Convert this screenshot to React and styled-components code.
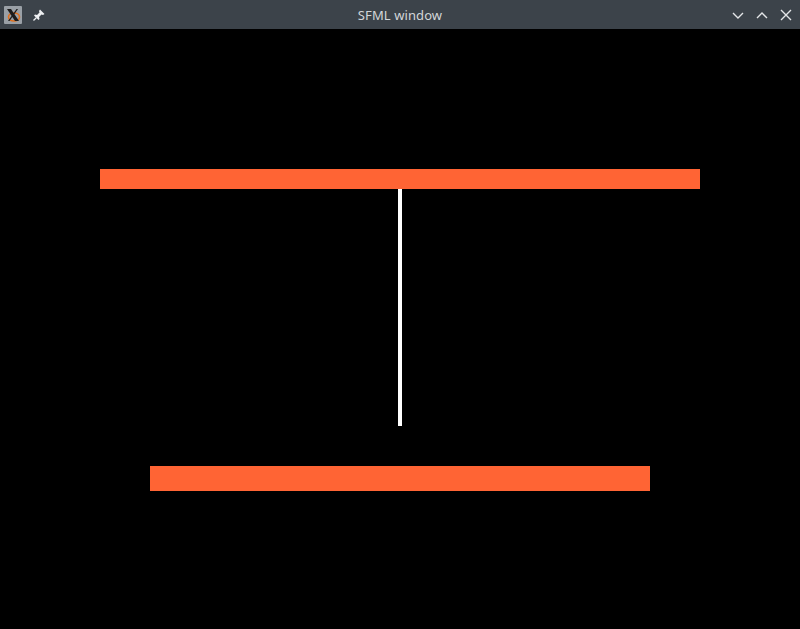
import React from "react";
import styled, { createGlobalStyle } from "styled-components";

const GlobalStyle = createGlobalStyle`
  html, body {
    margin: 0;
    padding: 0;
    background: #000;
  }
  body {
    font-family: "Noto Sans", "DejaVu Sans", sans-serif;
  }
`;

const Window = styled.div`
  width: 800px;
  height: 629px;
  display: flex;
  flex-direction: column;
  background: #000;
  overflow: hidden;
`;

const TitleBar = styled.div`
  height: 29px;
  flex: 0 0 29px;
  background: #3c434a;
  display: grid;
  grid-template-columns: 1fr auto 1fr;
  align-items: center;
  color: #d3d6d9;
  font-size: 13px;
`;

const Side = styled.div`
  display: flex;
  align-items: center;
  gap: ${p => p.gap || 6}px;
  justify-content: ${p => (p.right ? "flex-end" : "flex-start")};
  padding: ${p => (p.right ? "0 7px 0 0" : "0 0 0 4px")};
`;

const AppIcon = styled.div`
  width: 18px;
  height: 18px;
  background: #9aa0a6;
  border-radius: 1px;
  display: flex;
  align-items: center;
  justify-content: center;
`;

const Title = styled.div`
  letter-spacing: 0.1px;
`;

const Canvas = styled.div`
  flex: 1;
  display: flex;
  flex-direction: column;
  align-items: center;
  padding-top: 140px;
`;

const Paddle = styled.div`
  width: ${p => p.w}px;
  height: ${p => p.h}px;
  background: #ff6434;
`;

const Rope = styled.div`
  width: 4px;
  height: 237px;
  background: #fff;
  margin-bottom: 40px;
`;

const Chevron = ({ up }) => (
  <svg width="14" height="14" viewBox="0 0 14 14">
    <path
      d={up ? "M2 10 L7 5 L12 10" : "M2 5 L7 10 L12 5"}
      fill="none"
      stroke="#e4e6e8"
      strokeWidth="1.4"
    />
  </svg>
);

const Close = () => (
  <svg width="14" height="14" viewBox="0 0 14 14">
    <path d="M2 2 L12 12 M12 2 L2 12" fill="none" stroke="#e4e6e8" strokeWidth="1.4" />
  </svg>
);

const Pin = () => (
  <svg width="14" height="14" viewBox="0 0 14 14">
    <path d="M8 1.5 L12.5 6 L11 7 L9.5 6.5 L7 9 L7.5 11 L6.5 12 L2 7.5 L3 6.5 L5 7 L7.5 4.5 L7 3 Z" fill="#eef0f2" />
    <path d="M4.3 9.7 L1.5 12.5" stroke="#eef0f2" strokeWidth="1.3" />
  </svg>
);

const XLogo = () => (
  <svg width="16" height="16" viewBox="0 0 16 16">
    <ellipse cx="9" cy="10" rx="5.5" ry="4" fill="none" stroke="#e0701e" strokeWidth="1.6" />
    <path d="M2 2 L6 2 L14 14 L10 14 Z" fill="#1c1c1c" />
    <path d="M13 2 L11.5 2 L3 14 L4.5 14 Z" fill="#1c1c1c" />
  </svg>
);

export default function App() {
  return (
    <>
      <GlobalStyle />
      <Window>
        <TitleBar>
          <Side gap={10}>
            <AppIcon>
              <XLogo />
            </AppIcon>
            <Pin />
          </Side>
          <Title>SFML window</Title>
          <Side right gap={10}>
            <Chevron />
            <Chevron up />
            <Close />
          </Side>
        </TitleBar>
        <Canvas>
          <Paddle w={600} h={20} />
          <Rope />
          <Paddle w={500} h={25} />
        </Canvas>
      </Window>
    </>
  );
}
